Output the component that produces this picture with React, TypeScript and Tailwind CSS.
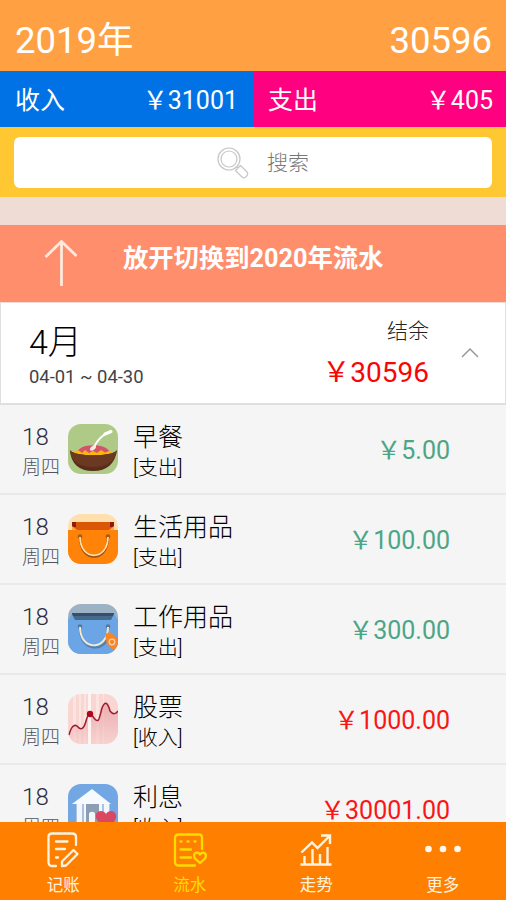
import { ReactNode } from "react";

interface RecordItem {
    day: string;
    week: string;
    name: string;
    type: string;
    amount: string;
    income?: boolean;
    icon: ReactNode;
}

const BreakfastIcon = () => (
    <svg viewBox="0 0 50 50" className="size-[50px]">
        <rect width="50" height="50" fill="#afca86" />
        <path d="M8 30C10 25 15 21 23 21.500C33 20 41 24 43 30Z" fill="#d6526b" />
        <path
            d="M5 31L6 27L11 26.500L14 29L17 26L21 29L25 27L29 29L33 26L37 28.500L42 26.500L45 31L25 33Z"
            fill="#fcb70d"
        />
        <path d="M2 26C3 40 11 47 25 47S47 40 49 26C46 33 5 33 2 26Z" fill="#592d19" />
        <path d="M2 26C3 38 11 43 25 43S47 38 49 26C46 33 5 33 2 26Z" fill="#6b3821" />
        <path d="M26 23C29 17 34 11 41 8.500" fill="none" stroke="#fff" strokeWidth="2" strokeLinecap="round" />
        <path d="M37 10L43 7.500" stroke="#fff" strokeWidth="3" strokeLinecap="round" />
        <ellipse cx="25" cy="24" rx="3.500" ry="2" fill="#fbe6e5" transform="rotate(-40 25 24)" />
    </svg>
);

const BagIcon = () => (
    <svg viewBox="0 0 50 50" className="size-[50px]">
        <rect width="50" height="50" fill="#ffdfae" />
        <rect x="4" y="8" width="42" height="9" fill="#d95705" />
        <path d="M4 8H8V13H4ZM42 8H46V13H42Z" fill="#8f1c0a" />
        <path d="M0 16H4V13L9 16H41L46 13V16H50V50H0Z" fill="#ff8209" />
        <path d="M4 12L9 16H4ZM46 12L41 16H46Z" fill="#ffa24a" />
        <circle cx="12" cy="22.500" r="2.300" fill="#a65a1c" />
        <circle cx="40" cy="22.500" r="2.300" fill="#a65a1c" />
        <path d="M12 24C12 49 40 49 40 24" fill="none" stroke="#9c4e10" strokeWidth="2" />
        <path d="M12 23C12 47.500 40 47.500 40 23" fill="none" stroke="#ffe0a8" strokeWidth="1.700" />
    </svg>
);

const WorkBagIcon = () => (
    <svg viewBox="0 0 50 50" className="size-[50px]">
        <rect width="50" height="50" fill="#9db2c4" />
        <path d="M4 9H46V17H4Z" fill="#46698c" />
        <path d="M4 9H46V12H4Z" fill="#35506d" />
        <path d="M0 16L4 10L7 16H43L46 10L50 16V50H0Z" fill="#6ba5e6" />
        <circle cx="12" cy="22.500" r="2.300" fill="#597897" />
        <circle cx="40" cy="22.500" r="2.300" fill="#597897" />
        <path d="M12 24C12 49 38 48 40 32" fill="none" stroke="#5480ae" strokeWidth="2.200" />
        <path d="M12 23C12 48 40 47 40 23" fill="none" stroke="#f3ead0" strokeWidth="1.900" />
        <path d="M37 30L42 28L49 34L50 42L45 46L39 41Z" fill="#f5862b" />
        <circle cx="44" cy="38" r="2.800" fill="none" stroke="#ffd0a0" strokeWidth="1.300" />
    </svg>
);

const StockIcon = () => (
    <svg viewBox="0 0 50 50" className="size-[50px]">
        <defs>
            <linearGradient id="stock" x1="0" y1="0" x2="0" y2="1">
                <stop offset="0" stopColor="#e0939a" />
                <stop offset="1" stopColor="#f5cfcd" />
            </linearGradient>
        </defs>
        <rect width="50" height="50" fill="#fad6d2" />
        <path d="M5 0H8V50H5ZM11 0H13V50H11ZM16 0H18V50H16ZM28 0H31V50H28ZM35 0H36V50H35Z" fill="#fce4e0" />
        <path
            d="M1 41C3 33 6 30 9 32C12 36 16 35 18 27C20 22 23 20 26 24C31 30 31 25 34 14C37 6 40 9 42 17C45 21 48 20 50 17V50H0Z"
            fill="url(#stock)"
            opacity="0.6"
        />
        <path d="M20 0H23V50H20Z" fill="#fff4f2" />
        <path
            d="M1 41C3 33 6 30 9 32C13 37 16 35 18 27C20 19 23 19 26 24C31 30 31 25 34 14C37 6 40 9 42 17C45 21 48 20 50 17"
            fill="none"
            stroke="#9e1c2e"
            strokeWidth="1.500"
        />
        <circle cx="22" cy="20" r="3.200" fill="#b00620" />
    </svg>
);

const InterestIcon = () => (
    <svg viewBox="0 0 50 50" className="size-[50px]">
        <rect width="50" height="50" fill="#72a7e3" />
        <path d="M8 20H42V42H8Z" fill="#a9c3df" />
        <path d="M9 20H14V42H9ZM16 20H18V42H16ZM31 20H34V42H31ZM36 20H41V42H36Z" fill="#f2f7fd" />
        <path d="M18 20H31V42H18Z" fill="#8b9eb3" />
        <path d="M21 30C21 27 27 27 27 30V42H21Z" fill="#f2f7fd" />
        <path d="M4 20L24 5L43 20Z" fill="#f6faff" />
        <path d="M38 44C30 38 27 35 28 30C30 26 36 26 38 30C40 26 47 26 48 31C49 36 45 39 38 44Z" fill="#d94763" />
    </svg>
);

const SearchIcon = () => (
    <svg viewBox="0 0 32 32" className="size-8" fill="none" stroke="#c6c6c6" strokeWidth="1.200">
        <circle cx="12" cy="12" r="11" />
        <circle cx="12" cy="12" r="8" />
        <path d="M19.500 19.500L21 21M18.500 23.500L23.500 18.500L30.500 25.500Q31.500 28 28 30.500Q26.500 31.500 25 30Z" strokeLinejoin="round" />
    </svg>
);

const NoteIcon = () => (
    <svg viewBox="0 0 34 36" className="h-9 w-[34px]" fill="none" stroke="#fff3e0" strokeWidth="2.300" strokeLinecap="round">
        <path d="M10 34H6Q2.500 34 2.500 30V5Q2.500 1.500 6 1.500H26Q30 1.500 30 5V13" />
        <path d="M10 9.500H21.500M10 17H19M10 25.500H12" />
        <path d="M27.500 18L31.500 22L20 33.500L16 34V29.500Z" strokeWidth="2.300" strokeLinejoin="round" />
    </svg>
);

const FlowIcon = () => (
    <svg viewBox="0 0 34 36" className="h-9 w-[34px]" fill="none" stroke="#ffdc00" strokeWidth="2.300" strokeLinecap="round">
        <path d="M22 33.500H5Q2 33.500 2 30V6Q2 2.500 6 2.500H26Q29 2.500 29 6V17" />
        <path d="M7.500 9.500H8.500M14.500 9.500H15.500M21.500 9.500H22.500M7.500 17.500H18M7.500 25.500H18" />
        <path d="M27 31L21.500 26Q20 21 24 20.500Q26 20.500 27 22.500Q29 20 31.500 21Q34 23 32 26.500Z" strokeLinejoin="round" />
    </svg>
);

const TrendIcon = () => (
    <svg viewBox="0 0 34 36" className="h-9 w-[34px]" fill="none" stroke="#fff3e0" strokeWidth="2.400">
        <path d="M1.500 32.500H32.500M5.500 24V32M13.500 17V32M21 22V32M28.500 15V32" />
        <path d="M2.500 20.500L13 10.500L18.500 16L30 4.500M22 3.500H31V12" />
    </svg>
);

const MoreIcon = () => (
    <svg viewBox="0 0 38 36" className="h-9 w-[38px]" fill="#fff8ef">
        <circle cx="4.500" cy="17" r="3.300" />
        <circle cx="19" cy="17" r="3.300" />
        <circle cx="33.500" cy="17" r="3.300" />
    </svg>
);

const records: RecordItem[] = [
    { day: "18", week: "周四", name: "早餐", type: "[支出]", amount: "5.00", icon: <BreakfastIcon /> },
    { day: "18", week: "周四", name: "生活用品", type: "[支出]", amount: "100.00", icon: <BagIcon /> },
    { day: "18", week: "周四", name: "工作用品", type: "[支出]", amount: "300.00", icon: <WorkBagIcon /> },
    { day: "18", week: "周四", name: "股票", type: "[收入]", amount: "1000.00", income: true, icon: <StockIcon /> },
    { day: "18", week: "周四", name: "利息", type: "[收入]", amount: "30001.00", income: true, icon: <InterestIcon /> },
];

const tabs = [
    { label: "记账", icon: <NoteIcon /> },
    { label: "流水", icon: <FlowIcon />, active: true },
    { label: "走势", icon: <TrendIcon /> },
    { label: "更多", icon: <MoreIcon /> },
];

const RecordRow = ({ item }: { item: RecordItem }) => {
    return (
        <div className="h-[90px] shrink-0 border-b-2 border-[#e9e9e9] flex pl-[22px] pr-[56px]">
            <div className="w-[46px] pt-[18px] font-light">
                <div className="text-[24px] leading-[28px] tracking-[0.3px] text-[#2c2f40]">{item.day}</div>
                <div className="pt-[2px] text-[19px] leading-[30px] text-[#50525c]">{item.week}</div>
            </div>
            <div className="mt-[19px] size-[50px] rounded-[13px] overflow-hidden shrink-0">
                {item.icon}
            </div>
            <div className="ml-[15px] pt-[17px] font-light text-black">
                <div className="text-[25px] leading-[32px]">{item.name}</div>
                <div className="text-[20px] leading-[28px]">{item.type}</div>
            </div>
            <div
                className={`ml-auto pt-[30px] text-[25px] leading-[32px] ${
                    item.income ? "text-[#fa1616]" : "text-[#4ba586]"
                }`}
            >
                ￥{item.amount}
            </div>
        </div>
    );
};

const App = () => {
    return (
        <div className="w-[506px] h-[900px] flex flex-col overflow-hidden bg-[#f5f5f5] font-[Roboto,'Noto_Sans_CJK_SC',sans-serif]">
            <header className="h-[71px] shrink-0 bg-[#ffa143] text-white flex justify-between pl-[15px] pr-[14px] pt-[19px] text-[36.500px] leading-[44px]">
                <span>2019年</span>
                <span>30596</span>
            </header>

            <div className="h-14 shrink-0 grid grid-cols-2 text-[25px] leading-[60px] text-white">
                <div className="h-14 bg-[#0072e6] flex justify-between px-[15px]">
                    <span>收入</span>
                    <span>￥31001</span>
                </div>
                <div className="h-14 bg-[#ff0080] flex justify-between pl-[15px] pr-[13px]">
                    <span>支出</span>
                    <span>￥405</span>
                </div>
            </div>

            <div className="h-[70px] shrink-0 bg-[#ffc832] px-[14px] pt-[10px]">
                <div className="h-[51px] rounded-md bg-white flex items-center pl-[203px]">
                    <SearchIcon />
                    <span className="ml-[18px] pt-[2px] text-[21px] font-light text-[#777]">搜索</span>
                </div>
            </div>

            <div className="h-7 shrink-0 bg-[#efdcd5]"></div>

            <div className="h-[77px] shrink-0 bg-[#ff8e6c] flex pl-[43px] text-white">
                <svg viewBox="0 0 34 48" className="mt-[15px] h-12 w-[34px]" fill="none" stroke="#ffe9dc" strokeWidth="2.800">
                    <path d="M18.500 1.500V46M2.500 17L18.500 1.500L33.500 16" />
                </svg>
                <span className="ml-[46px] mt-[17px] text-[25.300px] leading-[34px] font-bold">
                    放开切换到2020年流水
                </span>
            </div>

            <section className="h-[103px] shrink-0 bg-white border border-b-2 border-[#dfdfdf] border-t-[#f0dcd5] flex pl-[28px]">
                <div className="pt-[18px]">
                    <div className="text-[34px] leading-[42px] font-light text-black">4月</div>
                    <div className="text-[18.400px] leading-[28px] text-[#444]">04-01 ~ 04-30</div>
                </div>
                <div className="ml-auto pt-[12px] text-right">
                    <div className="text-[21px] leading-[32px] font-light text-[#222]">结余</div>
                    <div className="text-[28px] leading-[51px] text-[#fa0505]">￥30596</div>
                </div>
                <svg viewBox="0 0 18 12" className="ml-[32px] mr-[26px] mt-[44px] h-3 w-[18px]" fill="none" stroke="#999" strokeWidth="1.500">
                    <path d="M1 10L9 2L17 10" />
                </svg>
            </section>

            <main className="flex-1 min-h-0 overflow-hidden flex flex-col">
                {records.map((item) => (
                    <RecordRow key={item.name} item={item} />
                ))}
            </main>

            <nav className="h-[78px] shrink-0 bg-[#ff8000] grid grid-cols-4">
                {tabs.map((tab) => (
                    <div
                        key={tab.label}
                        className={`flex flex-col items-center pt-[10px] ${
                            tab.active ? "text-[#ffdc00]" : "text-[#fff3e0]"
                        }`}
                    >
                        {tab.icon}
                        <span className="mt-[6px] text-[16.500px] leading-[24px]">{tab.label}</span>
                    </div>
                ))}
            </nav>
        </div>
    );
};

export default App;
